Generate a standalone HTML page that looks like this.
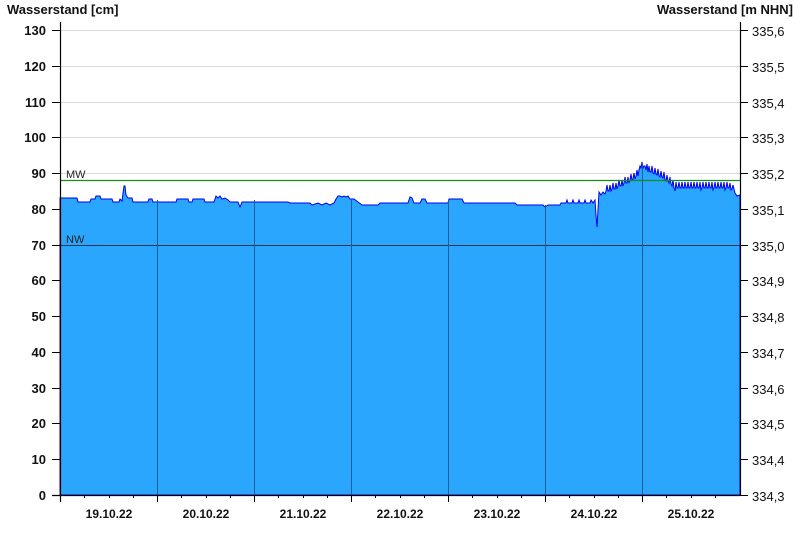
<!DOCTYPE html>
<html><head><meta charset="utf-8"><style>
html,body{margin:0;padding:0;background:#fff;}
svg{display:block;font-family:"Liberation Sans",Arial,sans-serif;}
</style></head><body>
<svg width="800" height="550" viewBox="0 0 800 550">
<text x="7" y="14" font-size="13" font-weight="bold" fill="#111">Wasserstand [cm]</text>
<text x="793" y="14" font-size="13" font-weight="bold" fill="#111" text-anchor="end">Wasserstand [m NHN]</text>
<g stroke="#dcdcdc" stroke-width="1">
<line x1="60" y1="30.5" x2="740" y2="30.5"/><line x1="60" y1="66.5" x2="740" y2="66.5"/><line x1="60" y1="102.5" x2="740" y2="102.5"/><line x1="60" y1="137.5" x2="740" y2="137.5"/><line x1="60" y1="173.5" x2="740" y2="173.5"/>
</g>
<path fill="#2ba6ff" stroke="#0000ee" stroke-width="1" d="M60,198 L77,198 L78,202 L90,202 L91,199 L95,199 L96,196 L100,196 L101,199 L112,199 L113,202 L119,202 L120,199 L122,201 L124,186 L125,186 L126,195 L128,198 L132,198 L133,202 L148,202 L149,199 L152,199 L153,202 L176,202 L177,199 L188,199 L189,202 L192,202 L193,199 L204,199 L205,202 L214,202 L216,196 L218,198 L220,196 L222,199 L225,198 L228,200 L230,202 L238,202 L240,207 L242,202 L288,202 L290,203 L310,203 L312,205 L318,203 L322,205 L326,203 L330,205 L334,203 L336,199 L338,196 L340,196 L342,197 L344,196 L346,197 L348,196 L350,199 L354,199 L358,202 L362,205 L378,205 L380,203 L408,203 L410,197 L412,198 L414,203 L420,203 L422,199 L425,199 L427,203 L448,203 L449,199 L462,199 L464,203 L515,203 L517,205 L540,205 L543,205 L545,207 L548,205 L560,205 L561,203 L566,203 L567,200 L568,203 L572,203 L573,200 L574,203 L578,203 L579,200 L580,203 L584,203 L585,200 L586,203 L590,203 L591,200 L593,203 L595,200 L596,215 L597,227 L598,210 L599,192 L601,195 L603,192 L605,194
L606,191 L607,185 L608,191 L609,191 L610,185 L611,191 L612,189 L613,183 L614,189 L615,189 L616,183 L617,189 L618,186 L619,180 L620,186 L621,186 L622,180 L623,186 L624,183 L625,177 L626,183 L627,183 L628,177 L629,183 L630,180 L631,174 L632,180 L633,179 L634,173 L635,179 L636,176 L637,170 L638,176 L639,170 L640,166 L641,168 L642,162 L643,168 L644,166 L645,166 L646,170 L647,164 L648,172 L649,166 L650,172 L651,172 L652,166 L653,173 L654,174 L655,168 L656,174 L657,175 L658,169 L659,176 L660,177 L661,171 L662,177 L663,178 L664,172 L665,180 L666,181 L667,175 L668,181 L669,183 L670,177 L671,184 L672,186 L673,180 L674,188 L675,191 L676,182 L677,188 L678,188 L679,182 L680,188 L681,188 L682,182 L683,188 L684,188 L685,182 L686,188 L687,188 L688,182 L689,188 L690,188 L691,182 L692,188 L693,188 L694,182 L695,188 L696,188 L697,182 L698,188 L699,188 L700,182 L701,190 L702,188 L703,182 L704,188 L705,188 L706,182 L707,188 L708,188 L709,182 L710,188 L711,188 L712,182 L713,190 L714,188 L715,182 L716,188 L717,188 L718,182 L719,188 L720,188 L721,182 L722,188 L723,188 L724,182 L725,190 L726,188 L727,182 L728,188 L729,188 L730,183 L731,190 L732,189 L733,185 L735,193 L737,196 L740,195 L740,495 L60,495 Z"/>
<line x1="60" y1="180.5" x2="740" y2="180.5" stroke="#1a8a1a" stroke-width="1.3"/>
<line x1="60" y1="245.5" x2="740" y2="245.5" stroke="#223355" stroke-width="1"/>
<text x="66" y="178" font-size="11" fill="#222">MW</text>
<text x="66" y="243" font-size="11" fill="#222">NW</text>
<g stroke="#1f5f8f" stroke-width="1">
<line x1="157.5" y1="200" x2="157.5" y2="495"/><line x1="254.5" y1="200" x2="254.5" y2="495"/><line x1="351.5" y1="200" x2="351.5" y2="495"/><line x1="448.5" y1="200" x2="448.5" y2="495"/><line x1="545.5" y1="205" x2="545.5" y2="495"/><line x1="642.5" y1="164" x2="642.5" y2="495"/>
</g>
<g stroke="#000" stroke-width="1.2" fill="none">
<line x1="60.5" y1="22" x2="60.5" y2="502"/>
<line x1="740.5" y1="22" x2="740.5" y2="495"/>
<line x1="52" y1="495.5" x2="740" y2="495.5"/>
</g>
<g stroke="#000" stroke-width="1">
<path d="M52 30.5h8M52 66.5h8M52 102.5h8M52 137.5h8M52 173.5h8M52 209.5h8M52 245.5h8M52 280.5h8M52 316.5h8M52 352.5h8M52 388.5h8M52 423.5h8M52 459.5h8"/>
<path d="M740 30.5h8M740 66.5h8M740 102.5h8M740 137.5h8M740 173.5h8M740 209.5h8M740 245.5h8M740 280.5h8M740 316.5h8M740 352.5h8M740 388.5h8M740 423.5h8M740 459.5h8M740 495.5h8"/>
<path d="M157.5 495v7M254.5 495v7M351.5 495v7M448.5 495v7M545.5 495v7M642.5 495v7"/>
<path d="M84.5 495v3M109.5 495v3M133.5 495v3M181.5 495v3M206.5 495v3M230.5 495v3M278.5 495v3M303.5 495v3M327.5 495v3M375.5 495v3M400.5 495v3M424.5 495v3M472.5 495v3M497.5 495v3M521.5 495v3M569.5 495v3M594.5 495v3M618.5 495v3M666.5 495v3M691.5 495v3M715.5 495v3"/>
</g>
<g font-size="13" font-weight="bold" fill="#111" text-anchor="end">
<text x="46" y="35">130</text><text x="46" y="71">120</text><text x="46" y="107">110</text><text x="46" y="142">100</text><text x="46" y="178">90</text><text x="46" y="214">80</text><text x="46" y="250">70</text><text x="46" y="285">60</text><text x="46" y="321">50</text><text x="46" y="357">40</text><text x="46" y="393">30</text><text x="46" y="428">20</text><text x="46" y="464">10</text><text x="46" y="500">0</text>
</g>
<g font-size="13" fill="#111">
<text x="752" y="36">335,6</text><text x="752" y="72">335,5</text><text x="752" y="108">335,4</text><text x="752" y="143">335,3</text><text x="752" y="179">335,2</text><text x="752" y="215">335,1</text><text x="752" y="251">335,0</text><text x="752" y="286">334,9</text><text x="752" y="322">334,8</text><text x="752" y="358">334,7</text><text x="752" y="394">334,6</text><text x="752" y="429">334,5</text><text x="752" y="465">334,4</text><text x="752" y="501">334,3</text>
</g>
<g font-size="12" font-weight="bold" fill="#111" text-anchor="middle">
<text x="109" y="518">19.10.22</text><text x="206" y="518">20.10.22</text><text x="303" y="518">21.10.22</text><text x="400" y="518">22.10.22</text><text x="497" y="518">23.10.22</text><text x="594" y="518">24.10.22</text><text x="691" y="518">25.10.22</text>
</g>
</svg>
</body></html>
